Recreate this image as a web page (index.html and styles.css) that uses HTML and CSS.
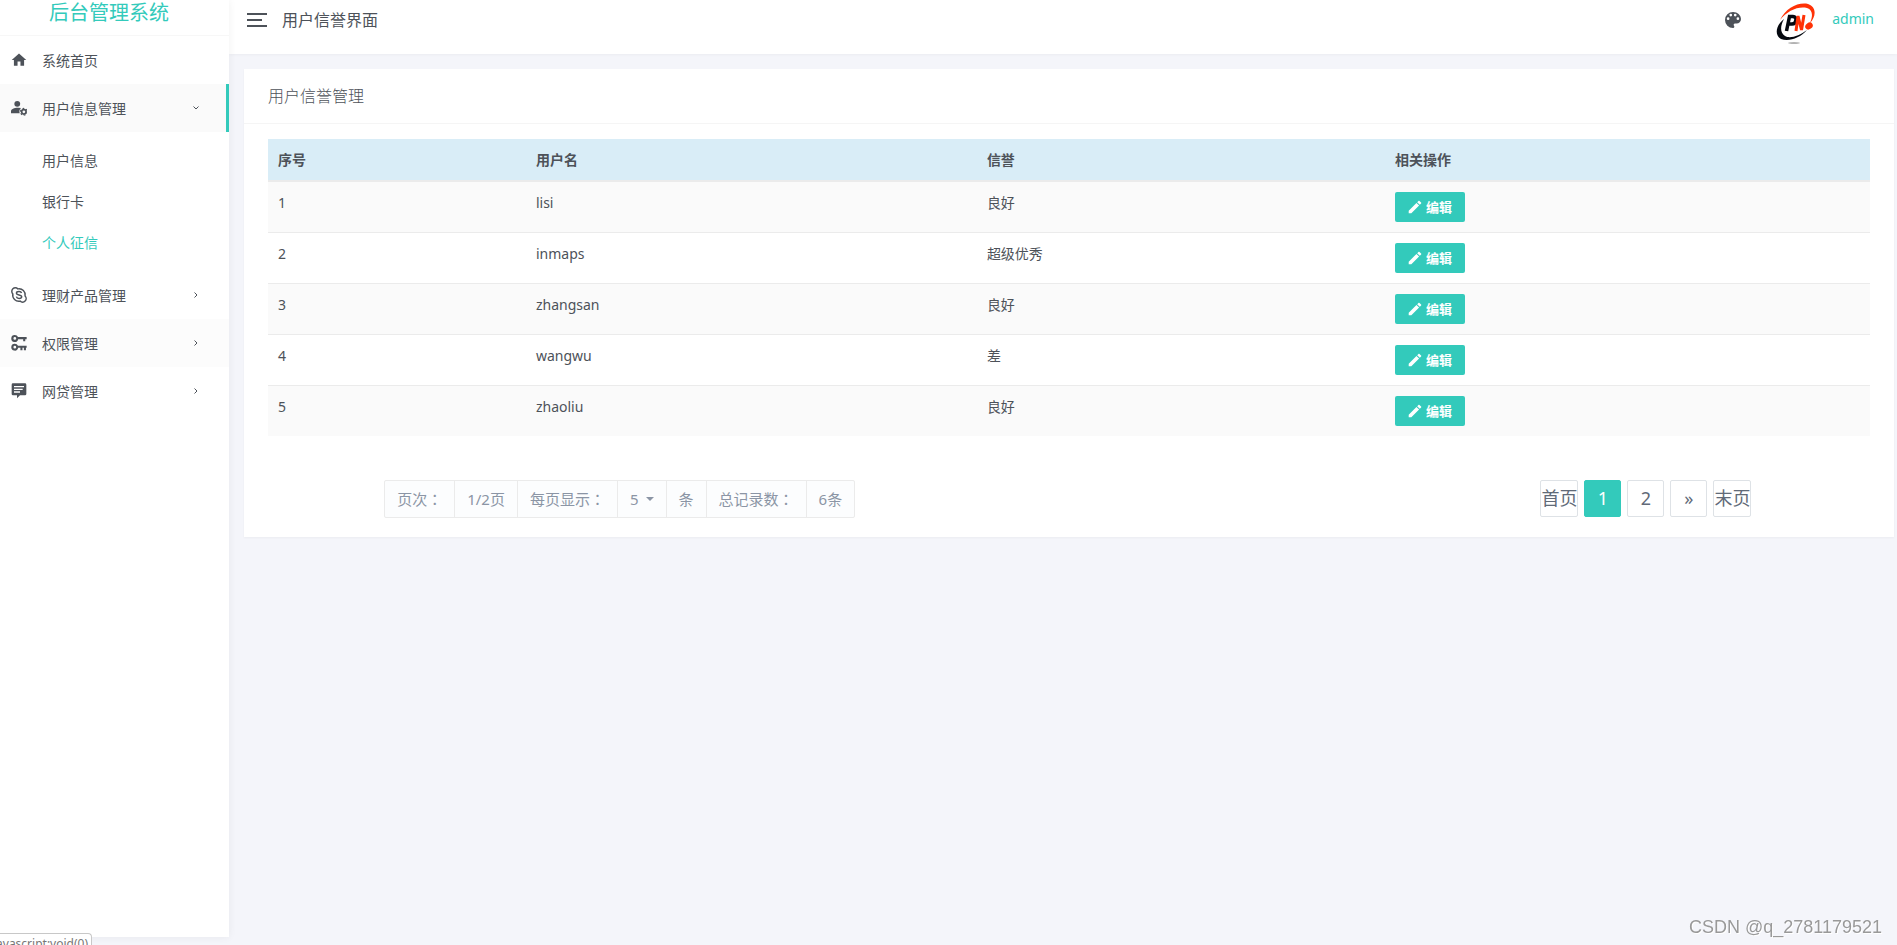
FILE: index.html
```html
<!DOCTYPE html>
<html lang="zh-CN">
<head>
<meta charset="utf-8">
<title>用户信誉界面</title>
<link rel="stylesheet" href="styles.css">
</head>
<body>
<svg class="defs" aria-hidden="true">
  <symbol id="pencil" viewBox="2 2 20 20"><path d="M20.71 7.04c.39-.39.39-1.04 0-1.41l-2.34-2.34c-.37-.39-1.02-.39-1.41 0l-1.84 1.83 3.75 3.75zM3 17.25V21h3.75L17.81 9.93l-3.75-3.75z"/></symbol>
  <symbol id="chevron" viewBox="0 0 8 8"><path d="M2.500 1.500 5 4 2.500 6.500" fill="none" stroke="currentColor" stroke-width="1"/></symbol>
</svg>
<div class="layout">
  <aside class="sidebar">
    <div class="brand"><a href="#">后台管理系统</a></div>
    <nav>
      <a class="item" href="#">
        <svg class="icon" viewBox="1 1 22 22"><path d="M10 20v-6h4v6h5v-8h3L12 3 2 12h3v8z"/></svg>
        <span class="label">系统首页</span>
      </a>
      <a class="item active" href="#">
        <svg class="icon" viewBox="0 1 23 23"><circle cx="9" cy="6.500" r="4.200"/><path d="M10 12c-5.500 0-10 2-10 5v3h12.500a7 7 0 0 1 2-7.400A15 15 0 0 0 10 12z"/><circle class="line" cx="18.500" cy="18" r="3.200" stroke-width="2.400"/><circle class="line" cx="18.500" cy="18" r="4.900" stroke-width="1.600" stroke-dasharray="2.560 2.560"/></svg>
        <span class="label">用户信息管理</span>
        <svg class="arrow open"><use href="#chevron"/></svg>
      </a>
      <div class="submenu">
        <a href="#">用户信息</a>
        <a href="#">银行卡</a>
        <a class="current" href="#">个人征信</a>
      </div>
      <a class="item" href="#">
        <svg class="icon" viewBox="1 1 22 22"><path class="line" stroke-width="2" d="M3.500 10.500A4.600 4.600 0 0 1 10.500 3.600a8.500 8.500 0 0 1 9.900 9.900A4.600 4.600 0 0 1 13.500 20.400a8.500 8.500 0 0 1-10-9.900z"/><path class="line" stroke-width="2" d="M15.500 9.300C15 7.800 13.500 7.300 12 7.300c-2 0-3.500.8-3.500 2.300 0 3.300 7.200 1.500 7.200 4.800 0 1.500-1.700 2.300-3.600 2.300-1.900 0-3.300-.9-3.700-2.400"/></svg>
        <span class="label">理财产品管理</span>
        <svg class="arrow"><use href="#chevron"/></svg>
      </a>
      <a class="item hover" href="#">
        <svg class="icon" viewBox="1 1 22 23"><path fill-rule="evenodd" d="M6 1a5 5 0 0 1 4.600 3H23v3h-2v3h-3V7h-7.200A5 5 0 1 1 6 1zm0 3a2 2 0 1 0 0 4 2 2 0 0 0 0-4zM6 13.500a5 5 0 0 1 4.600 3H23v3h-1v3.500h-3V19.500h-2V23h-3v-3.500h-3.200A5 5 0 1 1 6 13.500zm0 3a2 2 0 1 0 0 4 2 2 0 0 0 0-4z"/></svg>
        <span class="label">权限管理</span>
        <svg class="arrow"><use href="#chevron"/></svg>
      </a>
      <a class="item" href="#">
        <svg class="icon" viewBox="0 1 24 23"><path fill-rule="evenodd" d="M3 1h18a2 2 0 0 1 2 2v14a2 2 0 0 1-2 2h-7.500L9 23.500V19H3a2 2 0 0 1-2-2V3a2 2 0 0 1 2-2zm1.500 4v2h15V5zm0 4v2h13V9zm0 4v2h9v-2z"/></svg>
        <span class="label">网贷管理</span>
        <svg class="arrow"><use href="#chevron"/></svg>
      </a>
    </nav>
  </aside>

  <div class="main">
    <header class="topbar">
      <button class="toggler" type="button" aria-label="菜单"><span></span><span class="short"></span><span></span></button>
      <span class="page-name">用户信誉界面</span>
      <button class="palette" type="button" aria-label="主题">
        <svg viewBox="3 3 18 18"><path fill-rule="evenodd" d="M17.500 12a1.500 1.500 0 1 1 0-3 1.500 1.500 0 0 1 0 3m-3-4a1.500 1.500 0 1 1 0-3 1.500 1.500 0 0 1 0 3m-5 0a1.500 1.500 0 1 1 0-3 1.500 1.500 0 0 1 0 3m-3 4a1.500 1.500 0 1 1 0-3 1.500 1.500 0 0 1 0 3M12 3a9 9 0 0 0 0 18 1.500 1.500 0 0 0 1.500-1.500c0-.39-.15-.74-.39-1a1.500 1.500 0 0 1 1.120-2.500H16a5 5 0 0 0 5-5c0-4.420-4.030-8-9-8z"/></svg>
      </button>
      <svg class="avatar" viewBox="0 0 40 42" role="img" aria-label="PN">
        <path fill="#ff3206" d="M4 18C10 6 22 0 32 2c9 3 8 13 2 19 3-7 3-13-3-15C22 4 11 9 4 18z"/>
        <path fill="#050910" d="M8 17C0 23-2 33 5 37c8 3 19-1 26-9-8 6-17 9-22 6-5-3-5-10-1-17z"/>
        <path fill="none" stroke="#050910" stroke-width="3.500" d="M10.500 29 13.500 14.500H17c4.500 0 3.500 7.500-1 7.500h-3"/>
        <path fill="none" stroke="#ff3206" stroke-width="3" stroke-linejoin="bevel" d="M20 29 22 14l3.500 14L28 13"/>
        <ellipse cx="33" cy="24" rx="4" ry="3.200" fill="#ff3206" transform="rotate(-35 33 24)"/>
        <ellipse cx="18" cy="41" rx="6" ry=".7" fill="#999"/>
      </svg>
      <a class="user" href="#">admin</a>
    </header>

    <main class="card">
      <h1 class="card-title">用户信誉管理</h1>
      <div class="card-body">
        <table class="grid">
          <colgroup><col class="c-no"><col class="c-name"><col class="c-credit"><col></colgroup>
          <thead><tr><th>序号</th><th>用户名</th><th>信誉</th><th>相关操作</th></tr></thead>
          <tbody>
            <tr><td>1</td><td>lisi</td><td>良好</td><td><button class="edit" type="button"><svg><use href="#pencil"/></svg>编辑</button></td></tr>
            <tr><td>2</td><td>inmaps</td><td>超级优秀</td><td><button class="edit" type="button"><svg><use href="#pencil"/></svg>编辑</button></td></tr>
            <tr><td>3</td><td>zhangsan</td><td>良好</td><td><button class="edit" type="button"><svg><use href="#pencil"/></svg>编辑</button></td></tr>
            <tr><td>4</td><td>wangwu</td><td>差</td><td><button class="edit" type="button"><svg><use href="#pencil"/></svg>编辑</button></td></tr>
            <tr><td>5</td><td>zhaoliu</td><td>良好</td><td><button class="edit" type="button"><svg><use href="#pencil"/></svg>编辑</button></td></tr>
          </tbody>
        </table>
        <div class="paging">
          <div class="summary">
            <span>页次<span class="colon" lang="zh-TW">：</span></span><span>1/2页</span><span>每页显示<span class="colon" lang="zh-TW">：</span></span><button class="size" type="button" aria-haspopup="true">5<i class="caret"></i></button><span>条</span><span>总记录数<span class="colon" lang="zh-TW">：</span></span><span>6条</span>
          </div>
          <nav class="pager">
            <a href="#">首页</a><a class="on" href="#">1</a><a href="#">2</a><a href="#">»</a><a href="#">末页</a>
          </nav>
        </div>
      </div>
    </main>
  </div>
</div>
<div class="status"><span>javascript:void(0)</span></div>
<div class="watermark">CSDN @q_2781179521</div>
</body>
</html>
```

FILE: styles.css
```css
* { box-sizing: border-box; }
body {
  margin: 0;
  background: #f4f5fa;
  color: #4d5259;
  font: 14px/21px "Noto Sans", "Noto Sans CJK SC", sans-serif;
  overflow: hidden;
}
a { color: inherit; text-decoration: none; }
button { font: inherit; color: inherit; border: 0; background: none; padding: 0; cursor: pointer; }
svg { fill: currentColor; flex: none; }
.line { fill: none; stroke: currentColor; }
.defs { position: absolute; width: 0; height: 0; }
.layout { display: flex; min-height: 100vh; }

.sidebar {
  flex: none;
  width: 229px;
  height: calc(100vh - 8px);
  background: #fff;
  box-shadow: 0 0 8px rgba(0, 0, 0, .06);
  z-index: 2;
}
.brand {
  height: 36px;
  padding: 0 11px 0 0;
  border-bottom: 1px solid #f7f7f7;
  text-align: center;
  font-size: 20px;
  line-height: 25px;
  color: #33cabb;
}
.item {
  display: flex;
  align-items: center;
  height: 48px;
  padding: 0 26px 0 11px;
  border-right: 3px solid transparent;
}
.item.active { background: #fafafa; border-color: #33cabb; }
.item.hover { background: #fcfcfc; }
.icon { width: 16px; height: 16px; margin-right: 15px; }
.label { flex: 1; }
.arrow { width: 8px; height: 8px; }
.arrow.open { transform: rotate(90deg); }
.submenu { padding: 8px 0; }
.submenu a { display: block; padding: 10px 0 10px 42px; }
.submenu .current { color: #33cabb; }

.main { flex: 1; min-width: 0; }
.topbar {
  display: flex;
  align-items: flex-start;
  height: 54px;
  padding: 0 23px 0 18px;
  background: #fff;
  box-shadow: 0 0 4px rgba(0, 0, 0, .06);
}
.toggler { display: flex; flex-direction: column; gap: 4px; width: 20px; margin: 13px 15px 0 0; }
.toggler span { width: 20px; height: 2px; background: #4d5259; }
.toggler .short { width: 15px; }
.page-name { flex: 1; font-size: 16px; line-height: 40px; }
.palette { width: 16px; height: 16px; margin: 12px 35px 0 0; }
.palette svg { display: block; width: 16px; height: 16px; }
.avatar { width: 40px; height: 42px; margin: 2px 16px 0 0; }
.user { line-height: 38px; color: #33cabb; }

.card { margin: 15px 3px 0 15px; background: #fff; box-shadow: 0 1px 2px rgba(0, 0, 0, .04); }
.card-title {
  margin: 0;
  padding: 15px 24px;
  border-bottom: 1px solid #f5f5f5;
  font-size: 16px;
  font-weight: 300;
  line-height: 24px;
}
.card-body { padding: 15px 24px 19px; }
.grid { width: 100%; border-collapse: separate; border-spacing: 0; table-layout: fixed; }
.c-no { width: 16.1%; }
.c-name { width: 28.15%; }
.c-credit { width: 25.47%; }
.grid th { padding: 10px; background: #d9edf7; text-align: left; font-weight: 700; }
.grid td { height: 51px; padding: 10px; border-top: 1px solid #ebebeb; vertical-align: top; }
.grid tbody tr:first-child td { border-top-width: 2px; }
.grid tbody tr:nth-child(odd) { background: #fafafa; }
.edit {
  display: flex;
  align-items: center;
  justify-content: center;
  gap: 4px;
  width: 70px;
  height: 30px;
  border-radius: 2px;
  background: #33cabb;
  color: #fff;
  font-size: 13px;
  font-weight: 700;
}
.edit svg { width: 14px; height: 14px; }

.paging {
  display: flex;
  justify-content: space-between;
  align-items: flex-start;
  margin-top: 44px;
  padding: 0 7.4% 0 7.25%;
}
.summary { display: flex; border: 1px solid #ebebeb; border-radius: 2px; color: #8b95a5; font-size: 15px; line-height: 36px; background: #fcfdfe; }
.summary > * { padding: 0 12px; }
.summary > * + * { border-left: 1px solid #ebebeb; }
.summary .size { display: flex; align-items: center; gap: 7px; }
.colon { font-family: "Noto Sans CJK TC", sans-serif; line-height: 1; }
.caret { border: 4px solid transparent; border-top-color: currentColor; border-bottom: 0; }
.pager { display: flex; gap: 6px; font-size: 18px; line-height: 35px; color: #616a78; }
.pager a { min-width: 37px; border: 1px solid #dee2e6; border-radius: 2px; text-align: center; }
.pager .on { background: #33cabb; border-color: #33cabb; color: #fff; }

.status {
  position: fixed;
  left: 0;
  bottom: 0;
  z-index: 3;
  display: flex;
  justify-content: flex-end;
  width: 92px;
  height: 12px;
  padding: 1px 3px 0 0;
  overflow: hidden;
  border: 1px solid #c8c8c8;
  border-width: 1px 1px 0 0;
  border-radius: 0 4px 0 0;
  background: #fff;
  color: #777;
  font-size: 12px;
  line-height: 18px;
}
.watermark {
  position: fixed;
  right: 15px;
  bottom: 8px;
  color: #999;
  font: 18px/20px "Liberation Sans", sans-serif;
  text-shadow: 1px 1px 0 #fff;
}
```
